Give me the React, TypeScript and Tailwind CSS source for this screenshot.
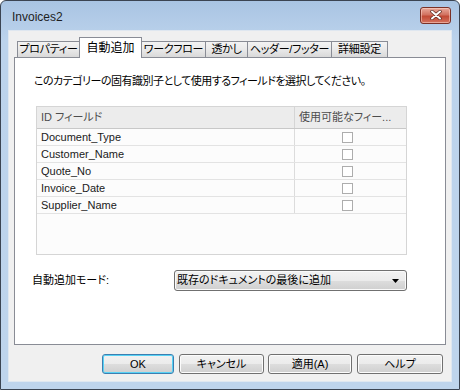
import React from 'react';

const fields = ['Document_Type', 'Customer_Name', 'Quote_No', 'Invoice_Date', 'Supplier_Name'];
const tabs = ['プロパティー', '自動追加', 'ワークフロー', '透かし', 'ヘッダー/フッター', '詳細設定'];
const tabWidths = ['w-[63px]', 'w-[63px]', 'w-[65px]', 'w-[43px]', 'w-[85px]', 'w-[57px]'];

const WinButton = ({ label, width, primary }: { label: string; width: string; primary?: boolean }) => (
  <button
    className={`${width} h-[20px] rounded-[3px] border text-[11px] text-black flex items-center justify-center bg-[linear-gradient(#f2f2f2_0%,#ebebeb_50%,#dddddd_51%,#cfcfcf_100%)] ${
      primary ? 'border-[#3c7fb1] shadow-[inset_0_0_0_1px_#58d2f5]' : 'border-[#707070] shadow-[inset_0_0_0_1px_#fcfcfc]'
    }`}
  >
    {label}
  </button>
);

export default function App() {
  return (
    <div className="w-[461px] h-[390px] bg-white font-['Liberation_Sans','Noto_Sans_CJK_JP',sans-serif] [font-feature-settings:'palt'] text-black">
      {/* Window frame */}
      <div className="w-[460px] h-[390px] rounded-t-[6px] border border-[#3b4452] bg-[linear-gradient(#a9c4e3,#bcd3ec_40px,#bed4ec)] flex flex-col">
        {/* Title bar */}
        <div className="h-[29px] flex items-center justify-between pl-[11px] pr-[8px]">
          <span className="text-[12px] text-[#1e1e1e] mt-[2px]">Invoices2</span>
          <div className="w-[31px] h-[17px] mt-[-1px] rounded-[3px] border border-[#7b3127] bg-[linear-gradient(#e9a99b,#d27260_45%,#c24a35_55%,#d4735f)] flex items-center justify-center shadow-[inset_0_0_0_1px_rgba(255,220,210,0.5)]">
            <svg width="12" height="10" viewBox="0 0 12 10">
              <path d="M2 1.5 L10 8.5 M10 1.5 L2 8.5" stroke="#5a2a22" strokeWidth="3.4" strokeLinecap="round" />
              <path d="M2 1.5 L10 8.5 M10 1.5 L2 8.5" stroke="#ffffff" strokeWidth="2" strokeLinecap="round" />
            </svg>
          </div>
        </div>

        {/* Client area */}
        <div className="mx-[7px] mb-[7px] flex-1 bg-[#f0f0f0] border border-[#dfe7f0] flex flex-col px-[5px] pt-[6px]">
          {/* Tabs */}
          <div className="flex items-end pl-[3px] h-[21px] -mb-px relative z-10">
            {tabs.map((t, i) =>
              i === 1 ? (
                <div
                  key={t}
                  className={`${tabWidths[i]} h-[21px] border border-b-0 border-[#898c95] bg-white text-[12px] flex items-center justify-center -ml-px pb-[1px]`}
                >
                  {t}
                </div>
              ) : (
                <div
                  key={t}
                  className={`${tabWidths[i]} h-[17px] border border-[#898c95] bg-[linear-gradient(#f3f3f3,#e9e9e9_50%,#d9d9d9)] text-[11px] tracking-[-0.3px] flex items-center justify-center ${i === 0 ? '' : '-ml-px'}`}
                >
                  {t}
                </div>
              )
            )}
          </div>

          {/* Panel */}
          <div className="h-[288px] border border-[#898c95] bg-white flex flex-col">
            <div className="mt-[15px] pl-[19px] text-[11px] leading-[16px] tracking-[-0.5px]">
              このカテゴリーの固有識別子として使用するフィールドを選択してください。
            </div>

            {/* List */}
            <div className="mt-[17px] ml-[21px] w-[371px] h-[149px] border border-[#d5d5d5] bg-[#fcfcfc] flex flex-col">
              <div className="h-[22px] flex bg-[#ececec] border-b border-[#c8c8c8] text-[11px] text-[#4d4d4d]">
                <div className="w-[257px] flex items-center pl-[4px]">ID フィールド</div>
                <div className="flex-1 flex items-center pl-[4px] border-l border-[#d5d5d5]">使用可能なフィー...</div>
              </div>
              {fields.map(f => (
                <div key={f} className="h-[17px] flex border-b border-[#e3e3e3] text-[11px]">
                  <div className="w-[257px] flex items-center pl-[4px] text-[#1a1a1a]">{f}</div>
                  <div className="flex-1 flex items-center justify-center border-l border-[#dcdcdc]">
                    <div className="w-[11px] h-[11px] border border-[#adadad] bg-white -ml-[7px]" />
                  </div>
                </div>
              ))}
            </div>

            {/* Mode row */}
            <div className="mt-[15px] ml-[17px] flex items-center">
              <div className="w-[142px] text-[11px]">自動追加モード:</div>
              <div className="w-[233px] h-[21px] rounded-[3px] border border-[#707070] bg-[linear-gradient(#f2f2f2_0%,#ebebeb_50%,#dddddd_51%,#cfcfcf_100%)] shadow-[inset_0_0_0_1px_#fafafa] flex items-center justify-between pl-[2px] pr-[7px] text-[11px]">
                <span>既存のドキュメントの最後に追加</span>
                <svg width="7" height="4" viewBox="0 0 7 4">
                  <path d="M0 0 H7 L3.5 4 Z" fill="#000" />
                </svg>
              </div>
            </div>
          </div>

          {/* Buttons */}
          <div className="mt-[9px] flex pl-[88px]">
            <WinButton label="OK" width="w-[72px]" primary />
            <div className="w-[5px]" />
            <WinButton label="キャンセル" width="w-[85px]" />
            <div className="w-[4px]" />
            <WinButton label="適用(A)" width="w-[84px]" />
            <div className="w-[5px]" />
            <WinButton label="ヘルプ" width="w-[86px]" />
          </div>
        </div>
      </div>
    </div>
  );
}
